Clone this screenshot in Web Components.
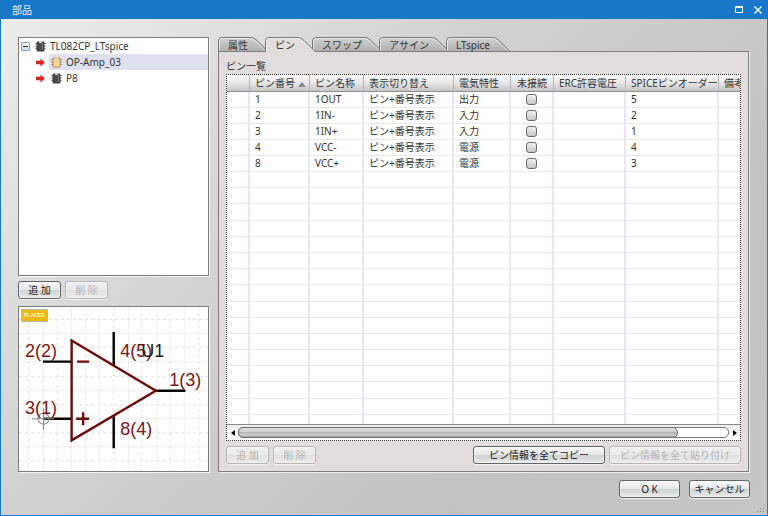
<!DOCTYPE html>
<html lang="ja">
<head>
<meta charset="utf-8">
<title>部品</title>
<style>
html, body { height: 100%; margin: 0; }
body { font: 10px/16px "Noto Sans", "Noto Sans CJK JP", sans-serif; color: #333; overflow: hidden; }
</style>
</head>
<body>
<parts-dialog></parts-dialog>
<script>
const define = (name, html, setup) => {
  const template = document.createElement('template');
  template.innerHTML = html;
  customElements.define(name, class extends HTMLElement {
    constructor() {
      super();
      this.attachShadow({ mode: 'open' }).append(template.content.cloneNode(true));
    }
    connectedCallback() { if (setup) setup(this, this.shadowRoot); }
  });
};

const chip = (fill, edge) => `
  <svg width="11" height="11" viewBox="0 0 11 11" aria-hidden="true">
    <path d="M0 2.5h11M0 5h11M0 7.5h11" stroke="#9a9a9a"/>
    <rect x="2" y="1" width="7" height="9" rx=".5" fill="${fill}" stroke="${edge}"/>
    <path d="M4 .5h3v1.500H4z" fill="#ddd"/>
    <path d="M7.500 2v7" stroke="#fff" stroke-opacity=".3"/>
  </svg>`;

define('part-node', `
<style>
:host { display: flex; align-items: center; height: 16px; padding-left: 15px; }
:host([root]) { padding-left: 0; }
.fold { width: 9px; height: 9px; padding: 0; margin: 0 5px 0 2px; border: 1px solid #8ba3b5; border-radius: 1px;
  background: linear-gradient(#fff, #c9d8e2); display: none; flex: none; }
.fold svg { display: block; }
:host([root]) .fold { display: block; }
:host([root]) .arrow { display: none; }
.arrow { flex: none; margin: 0 4px 0 2px; }
.label { flex: 1; display: flex; align-items: center; gap: 4px; height: 16px; line-height: 14px; padding-left: 2px; }
:host([root]) .label { padding-left: 0; }
:host([selected]) .label { background: #dfe0ee; }
.icon { display: flex; }
</style>
<button class="fold" aria-label="折りたたむ"><svg width="7" height="7"><path d="M1 3.500h5" stroke="#222"/></svg></button>
<svg class="arrow" width="9" height="9" viewBox="0 0 9 9" aria-hidden="true"><path d="M0 2.800h4.500V.5L9 4.500 4.500 8.500V6.200H0z" fill="#de2526"/></svg>
<span class="label"><span class="icon"></span><slot></slot></span>`,
(host, root) => {
  root.querySelector('.icon').innerHTML = host.hasAttribute('gold') ? chip('#f5d78c', '#b08d45') : chip('#4c4c4c', '#3a3a3a');
});

define('part-tree', `
<style>
:host { display: block; box-sizing: border-box; background: #fff; border: 1px solid #7c7c7c; box-shadow: 1px 1px #f4f4f4; overflow: hidden; }
</style>
<slot></slot>`);

define('skin-button', `
<style>
:host { display: block; }
button { display: block; box-sizing: border-box; width: 100%; height: 18px; padding: 0; font: inherit; line-height: 14px; color: #222;
  white-space: pre; border: 1px solid #606466; border-radius: 3px;
  background: linear-gradient(#f8f8f8, #e6e7e7 50%, #cfd2d2 52%, #e9eaea);
  box-shadow: 0 1px #f2f2f2, inset 0 0 0 1px #fff6; }
button:disabled { color: #b5b5b5; border-color: #b4b4b4; background: linear-gradient(#f0f0f0, #eaeaea 50%, #e0e0e0 52%, #ebebeb); }
</style>
<button><slot></slot></button>`,
(host, root) => { root.querySelector('button').disabled = host.hasAttribute('disabled'); });

define('symbol-preview', `
<style>
:host { display: block; box-sizing: border-box; background: #fff; border: 1px solid #7c7c7c; box-shadow: 1px 1px #f4f4f4; overflow: hidden; }
svg { display: block; width: 100%; height: 100%; }
text { font: 18px "Liberation Sans", Arial, sans-serif; fill: #7d1515; }
.badge { font: bold 5px "Liberation Sans", Arial, sans-serif; fill: #fff8d8; }
.name { fill: #1a1a1a; }
.grid { fill: none; stroke: #eee; }
.fine { stroke: #e2e2e2; stroke-dasharray: 3 3; }
</style>
<svg viewBox="19 307 189 164" preserveAspectRatio="xMinYMin slice" role="img" aria-label="オペアンプ記号">
  <path class="grid" d="M43.500 307v165M71.500 307v165M99.500 307v165M128.500 307v165M156.500 307v165M184.500 307v165M19 333.500h190M19 361.500h190M19 390.500h190M19 418.500h190M19 446.500h190"/>
  <path class="grid fine" d="M28.500 307v165M57.500 307v165M85.500 307v165M113.500 307v165M141.500 307v165M169.500 307v165M198.500 307v165M19 319.500h190M19 347.500h190M19 376.500h190M19 404.500h190M19 432.500h190M19 460.500h190"/>
  <path d="M43 361.500h29M43 418.500h29M113.500 332v34M113.500 415v33M155 390.500h30" stroke="#000" stroke-width="2.400"/>
  <path d="M71.500 340.500L155.500 390.500 71.500 440z" fill="none" stroke="#6d0a0a" stroke-width="2.400"/>
  <path d="M77 361.500h12M76 418.500h13M83 412v13" stroke="#6d0a0a" stroke-width="2.400"/>
  <path d="M32 418.500h22M43.500 408v22" stroke="#888"/><circle cx="43.500" cy="418.500" r="5.500" fill="none" stroke="#888"/>
  <text x="25" y="357">2(2)</text><text x="25" y="414">3(1)</text>
  <text x="120" y="357">4(5)</text><text class="name" x="141" y="357">U1</text>
  <text x="169" y="386">1(3)</text><text x="120" y="435">8(4)</text>
  <rect x="21.500" y="309.500" width="26" height="12" fill="#edb90c" stroke="#b5b5b5"/>
  <text class="badge" x="24" y="317">PLACED</text>
</svg>`);

define('tab-item', `
<style>
:host { display: block; position: relative; height: 15px; margin-right: -3px; }
:host([selected]) { z-index: 1; }
button { display: block; position: relative; height: 15px; padding: 0 20px 0 10px; border: 0; background: none; font: inherit; line-height: 14px; color: #333; }
svg { position: absolute; left: 0; top: 0; width: 100%; height: 15px; overflow: visible; }
</style>
<svg aria-hidden="true"></svg>
<button role="tab"><slot></slot></button>`,
(host, root) => {
  const on = host.hasAttribute('selected');
  const svg = root.querySelector('svg');
  const w = host.clientWidth;
  const shape = `M.5 15V4Q.5 .5 4 .5H${w - 17}Q${w - 14} .5 ${w - 11} 3.500L${w} 14.500`;
  svg.innerHTML = `<defs><linearGradient id="g" x2="0" y2="1"><stop stop-color="#d2d2d2"/><stop offset="1" stop-color="#adadad"/></linearGradient></defs>
    <path d="${shape}V15H.5z" fill="${on ? '#e1dddc' : 'url(#g)'}"/>
    <path d="${shape}" fill="none" stroke="#747474"/>
    <path d="M1.500 14V4Q2 1.500 4 1.500H${w - 17}Q${w - 15} 1.500 ${w - 12} 4.500L${w - 2} 14" fill="none" stroke="#fff" stroke-opacity=".6"/>
    ${on ? '' : `<path d="M0 14.500h${w}" stroke="#7c7c7c"/>`}`;
  root.querySelector('button').setAttribute('aria-selected', on);
});

define('pin-table', `
<style>
:host { display: flex; flex-direction: column; box-sizing: border-box; border: 1px dotted #333; background: #fff; overflow: hidden; min-width: 0; }
.view { flex: 1; min-height: 0; overflow: hidden; }
table { border-collapse: separate; border-spacing: 0; table-layout: fixed; width: 600px; height: 100%; }
th, td { box-sizing: border-box; padding: 0 0 0 5px; text-align: left; font-weight: normal; white-space: nowrap; overflow: hidden; }
th { height: 17px; line-height: 14px; background: linear-gradient(#fafafa, #e9e9e9 45%, #c6c6c6); border-bottom: 1px solid #8f8f8f; border-right: 1px solid #b2b2b2; }
td { height: 16px; line-height: 15px; border-bottom: 1px solid #e8e8e8; border-right: 2px solid #e8e6f5; }
.empty td { height: auto; padding: 7px 0; line-height: 0; }
.rest td { height: 9px; border-bottom: 0; padding: 0; line-height: 0; }
td.check { text-align: center; padding: 0; }
th.check { padding: 0; text-align: center; }
input { appearance: none; display: block; box-sizing: border-box; width: 11px; height: 11px; margin: 0 auto;
  border: 1px solid #6c6c6c; border-radius: 3px; background: linear-gradient(#f4f4f4, #c4c4c4); }
.sort { margin-left: 3px; }
.bar { display: flex; align-items: center; height: 15px; border-top: 1px solid #8a8a8a; background: linear-gradient(#eee, #fff); }
.bar button { width: 11px; height: 15px; border: 0; padding: 0; background: none; display: grid; place-items: center; }
.track { flex: 1; box-sizing: border-box; height: 11px; border: 1px solid #777; border-radius: 5px; background: #fff; }
.thumb { box-sizing: border-box; width: 90%; height: 11px; margin: -1px; border: 1px solid #6c6c6c; border-radius: 5px;
  background: linear-gradient(#e2e2e2, #cfcfcf 40%, #b4b4b4 50%, #cbcbcb 75%, #aaa); }
</style>
<div class="view"><table>
<colgroup></colgroup><thead><tr></tr></thead><tbody></tbody>
</table></div>
<div class="bar">
  <button aria-label="左へ"><svg width="4" height="6"><path d="M4 0v6L0 3z"/></svg></button>
  <div class="track"><div class="thumb"></div></div>
  <button aria-label="右へ"><svg width="4" height="6"><path d="M0 0v6l4-3z"/></svg></button>
</div>`,
(host, root) => {
  const cols = [['', 23], ['ピン番号', 60], ['ピン名称', 54], ['表示切り替え', 90], ['電気特性', 57], ['未接続', 43], ['ERC許容電圧', 72], ['SPICEピンオーダー', 93], ['備考', 108]];
  const rows = [[1, '1OUT', '出力', 5], [2, '1IN-', '入力', 2], [3, '1IN+', '入力', 1], [4, 'VCC-', '電源', 4], [8, 'VCC+', '電源', 3]];
  const sort = '<svg class="sort" width="8" height="5" aria-hidden="true"><path d="M0 5l4-5 4 5z" fill="#888"/></svg>';
  root.querySelector('colgroup').innerHTML = cols.map(c => `<col style="width:${c[1]}px">`).join('');
  root.querySelector('thead tr').innerHTML = cols.map((c, i) => `<th scope="col"${i === 5 ? ' class="check"' : ''}>${c[0]}${i === 1 ? sort : ''}</th>`).join('');
  const blank = '<td></td>'.repeat(9);
  root.querySelector('tbody').innerHTML = rows.map(([n, name, kind, order]) =>
    `<tr><td></td><td>${n}</td><td>${name}</td><td>ピン+番号表示</td><td>${kind}</td><td class="check"><input type="checkbox" aria-label="未接続 ${name}"></td><td></td><td>${order}</td><td></td></tr>`).join('')
    + `<tr class="empty">${blank}</tr>`.repeat(15) + `<tr class="rest">${blank}</tr>`;
});

define('parts-dialog', `
<style>
:host { display: flex; flex-direction: column; box-sizing: border-box; height: 100vh; border: 1px solid #1878c8; border-top: 0;
  background: linear-gradient(135deg, #ededed, #d0d0d0 42%, #c2c2c2 75%, #c6c6c6); }
header { display: flex; align-items: center; height: 19px; padding: 0 0 0 11px; background: #1877c8; color: #e4f1fb; }
h1 { flex: 1; margin: 0; font: inherit; }
header button { width: 19px; height: 19px; padding: 0; border: 0; background: none; display: grid; place-items: center; }
main { flex: 1; min-height: 0; display: flex; gap: 9px; padding: 18px 18px 0 17px; }
.left { flex: none; width: 191px; display: flex; flex-direction: column; }
part-tree { flex: 239; }
symbol-preview { flex: 166; min-height: 0; }
.left .row { padding: 5px 0 7px; }
.row { display: flex; gap: 4px; }
.row .small { width: 43px; }
.right { flex: 1; min-width: 0; display: flex; flex-direction: column; }
nav { display: flex; height: 14px; }
.panel { flex: 1; min-height: 0; display: flex; flex-direction: column; padding: 6px 7px 7px; border: 1px solid #7c7c7c; background: #e1dddc; box-shadow: 1px 1px #eee; }
h2 { margin: 0; font: inherit; }
pin-table { flex: 1; min-height: 0; margin-bottom: 5px; }
.panel .row .wide { width: 132px; }
.push { margin-left: auto; }
footer { display: flex; align-items: flex-start; justify-content: flex-end; gap: 9px; height: 35px; padding: 8px 17px 0 0; position: relative; }
footer skin-button { width: 61px; }
.grip { position: absolute; right: 2px; bottom: 2px; }
</style>
<header>
  <h1>部品</h1>
  <button aria-label="最大化"><svg width="8" height="7"><path d="M.5 .5h7v6h-7zM0 1.500h8" fill="none" stroke="#fff"/></svg></button>
  <button aria-label="閉じる"><svg width="8" height="8"><path d="M.5 .5l7 7M7.500 .5l-7 7" stroke="#fff" stroke-width="1.300"/></svg></button>
</header>
<main>
  <section class="left">
    <part-tree>
      <part-node root>TL082CP_LTspice</part-node>
      <part-node selected gold>OP-Amp_03</part-node>
      <part-node>P8</part-node>
    </part-tree>
    <div class="row"><skin-button class="small">追 加</skin-button><skin-button class="small" disabled>削 除</skin-button></div>
    <symbol-preview></symbol-preview>
  </section>
  <section class="right">
    <nav role="tablist">
      <tab-item>属性</tab-item>
      <tab-item selected>ピン</tab-item>
      <tab-item>スワップ</tab-item>
      <tab-item>アサイン</tab-item>
      <tab-item>LTspice</tab-item>
    </nav>
    <div class="panel">
      <h2>ピン一覧</h2>
      <pin-table></pin-table>
      <div class="row">
        <skin-button class="small" disabled>追 加</skin-button><skin-button class="small" disabled>削 除</skin-button>
        <skin-button class="wide push">ピン情報を全てコピー</skin-button><skin-button class="wide" disabled>ピン情報を全て貼り付け</skin-button>
      </div>
    </div>
  </section>
</main>
<footer>
  <skin-button>O K</skin-button><skin-button>キャンセル</skin-button>
  <svg class="grip" width="8" height="8" aria-hidden="true"><path d="M6 0h1v1H6zM3 3h1v1H3zM6 3h1v1H6zM0 6h1v1H0zM3 6h1v1H3zM6 6h1v1H6z" fill="#8c8c8c"/></svg>
</footer>`);
</script>
</body>
</html>
